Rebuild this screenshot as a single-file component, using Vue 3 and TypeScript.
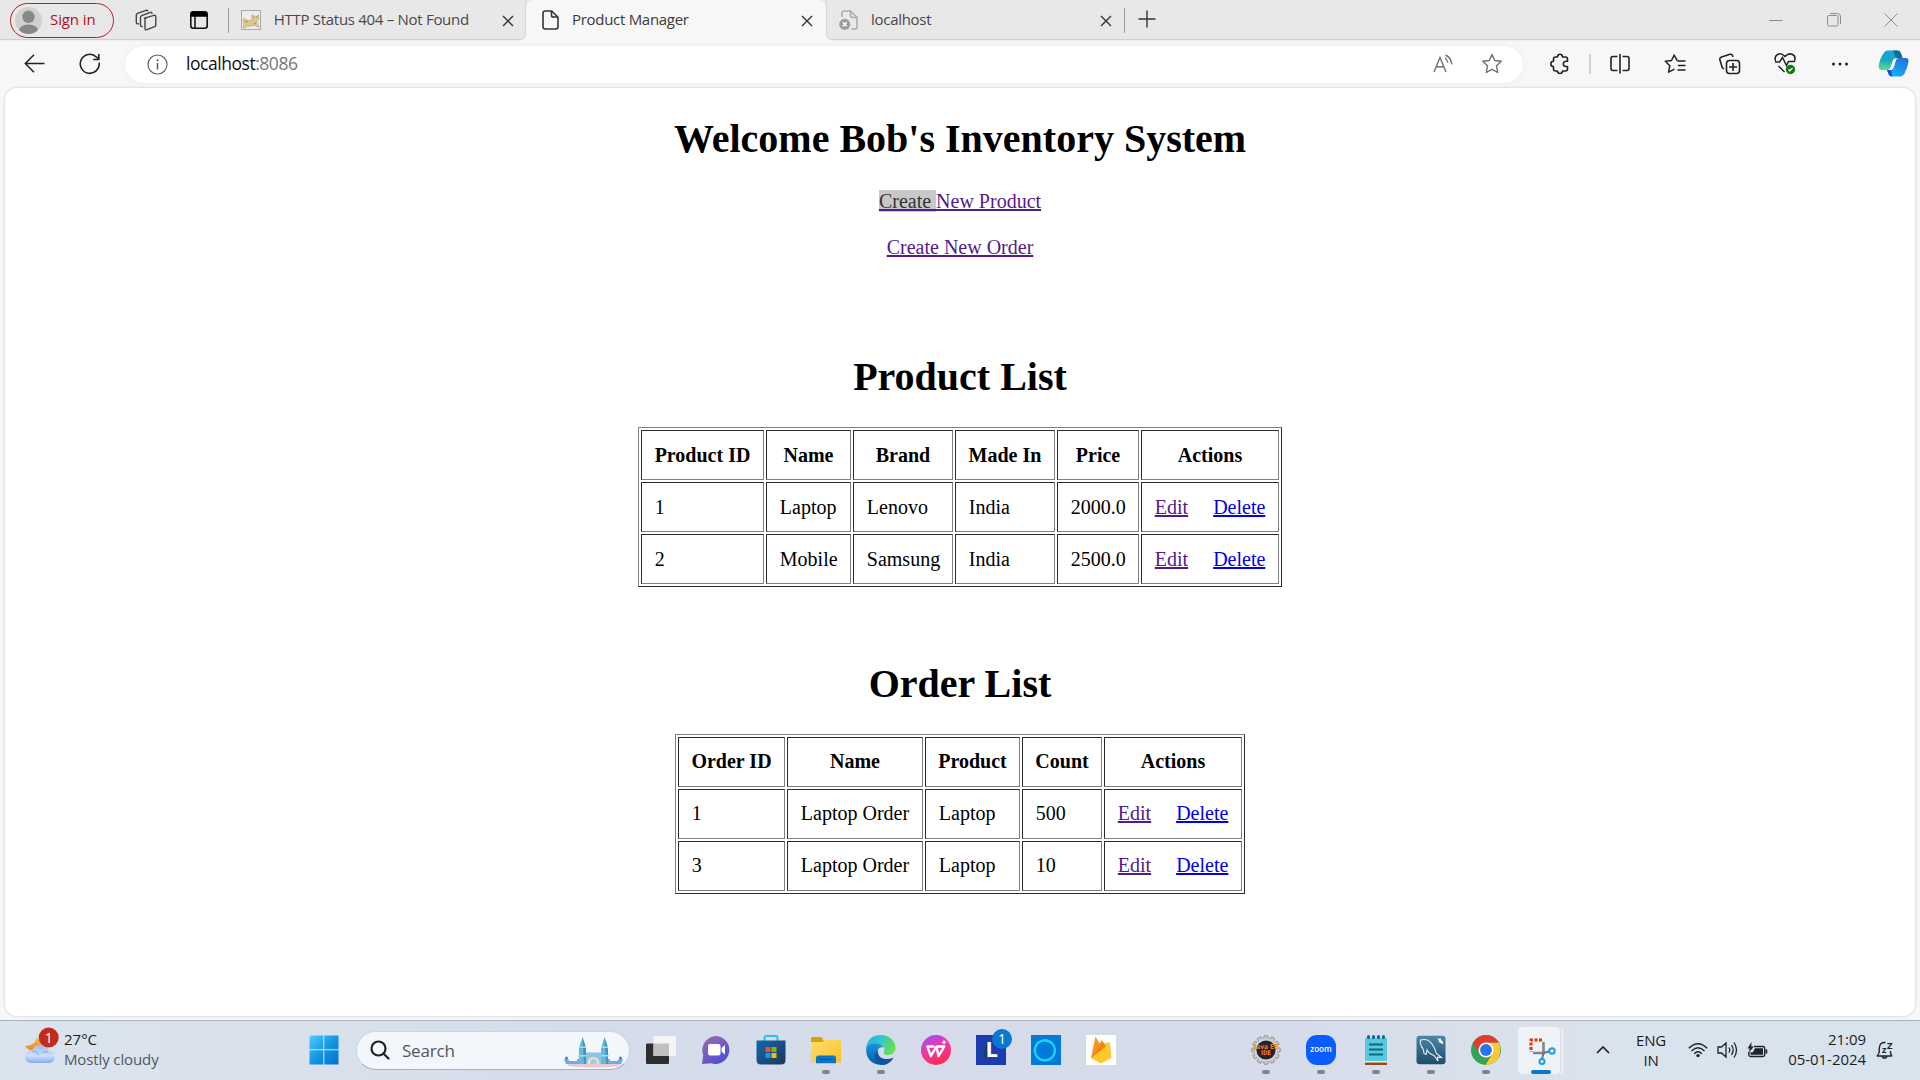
<script setup lang="ts">
interface Column { label: string; width: number }
interface Listing { title: string; kind: string; columns: Column[]; rows: string[][] }

const listings: Listing[] = [
  {
    title: 'Product List',
    kind: 'products',
    columns: [
      { label: 'Product ID', width: 123 },
      { label: 'Name', width: 85 },
      { label: 'Brand', width: 100 },
      { label: 'Made In', width: 100 },
      { label: 'Price', width: 82 },
      { label: 'Actions', width: 138 },
    ],
    rows: [
      ['1', 'Laptop', 'Lenovo', 'India', '2000.0'],
      ['2', 'Mobile', 'Samsung', 'India', '2500.0'],
    ],
  },
  {
    title: 'Order List',
    kind: 'orders',
    columns: [
      { label: 'Order ID', width: 107 },
      { label: 'Name', width: 136 },
      { label: 'Product', width: 95 },
      { label: 'Count', width: 80 },
      { label: 'Actions', width: 138 },
    ],
    rows: [
      ['1', 'Laptop Order', 'Laptop', '500'],
      ['3', 'Laptop Order', 'Laptop', '10'],
    ],
  },
]

const gearTeeth: number[] = Array.from({ length: 12 }, (_, i) => i * 30)
</script>

<template>
  <div class="desktop">
    <header class="strip">
      <div class="strip-left">
        <div class="signin">
          <svg class="avatar" width="27" height="27" viewBox="0 0 27 27">
            <defs><clipPath id="av"><circle cx="13.5" cy="13.5" r="13.5" /></clipPath></defs>
            <circle cx="13.5" cy="13.5" r="13.5" fill="#d2d0ce" />
            <g clip-path="url(#av)" fill="#8a8886"><circle cx="13.5" cy="9.8" r="6.2" /><ellipse cx="13.5" cy="24" rx="9.8" ry="6.6" /></g>
          </svg>
          <span>Sign in</span>
        </div>
        <svg class="workspaces" width="22" height="22" viewBox="0 0 22 22" fill="none" stroke="#444" stroke-width="1.4" stroke-linejoin="round" stroke-linecap="round">
          <path d="M9.5 9.2 19 6.3q1.8-.4 1.8 1.4v8.2q0 1.3-1.2 1.8l-7.6 3q-2 .7-2-1.3v-8.6q0-1.200 1.200-1.600" />
          <path d="M7.200 17.500q-1.700.300-1.700-1.400V8.400q0-1.300 1.200-1.800l8.800-3.200q1.200-.300 1.500.900" />
          <path d="M3.300 14.800q-2 .300-2-1.500V6.200q0-1.400 1.200-1.900L11 1.300q1.300-.300 1.700.700" />
        </svg>
        <svg class="tabmenu" width="18" height="18" viewBox="0 0 18 18"><rect x=".8" y=".8" width="16.400" height="16.400" rx="2.500" fill="none" stroke="#111" stroke-width="1.600" /><path d="M.8 5.800V3q0-2.200 2.200-2.200h12q2.200 0 2.200 2.200v2.800z" fill="#000" /><path d="M5 5v12" stroke="#111" stroke-width="1.500" /></svg>
        <i class="bar"></i>
        <div class="tab first">
          <svg width="20" height="20" viewBox="0 0 20 20"><rect x=".5" y=".5" width="19" height="19" fill="#ededeb" stroke="#a8a8a8" /><path d="M2 17.500 3 13.500 1.800 10l1.400-2 2.500 2.200 5 .3.300-6 2 1.700h2.500l2-1.700.3 4.500-2 2.500.5 2.700 2.200 2.300-1.500.5-3.700-1.700-3 .7-4 .3-3 2.200z" fill="#dfc68c" stroke="#a39a82" stroke-width=".5" /><path d="M12 7h1M15 7h1M4 12l3-1M13 13l2 1" stroke="#8b7748" stroke-width=".8" /></svg>
          <span>HTTP Status 404 – Not Found</span>
          <svg class="close" width="12" height="12" viewBox="0 0 12 12"><path d="m1 1 10 10M11 1 1 11" stroke="#333" stroke-width="1.400" /></svg>
        </div>
      </div>
      <div class="strip-active">
        <div class="tab active">
          <svg width="17" height="20" viewBox="0 0 17 20" fill="none" stroke="#333" stroke-width="1.600" stroke-linejoin="round"><path d="M3.200 1h6.500L16 7.300v9.500Q16 19 13.800 19H3.200Q1 19 1 16.800V3.200Q1 1 3.200 1z" /><path d="M9.500 1v4.200q0 1.800 1.800 1.800H16" /></svg>
          <span>Product Manager</span>
          <svg class="close" width="12" height="12" viewBox="0 0 12 12"><path d="m1 1 10 10M11 1 1 11" stroke="#333" stroke-width="1.400" /></svg>
        </div>
      </div>
      <div class="strip-right">
        <div class="tab third">
          <svg width="19" height="20" viewBox="0 0 19 20" fill="none" stroke="#aaa" stroke-width="1.500"><path d="M3 7V3q0-2 2-2h6.500L18 7.500V17q0 2-2 2h-3.500" /><path d="M11.500 1v4.500q0 2 2 2H18" /><circle cx="5.700" cy="14.300" r="5.500" fill="#9b9b9b" stroke="none" /><path d="m3.700 12.300 4 4m0-4-4 4" stroke="#fff" /></svg>
          <span>localhost</span>
          <svg class="close" width="12" height="12" viewBox="0 0 12 12"><path d="m1 1 10 10M11 1 1 11" stroke="#333" stroke-width="1.400" /></svg>
        </div>
        <i class="bar"></i>
        <svg class="plus" width="18" height="18" viewBox="0 0 18 18"><path d="M9 .5v17M.5 9h17" stroke="#333" stroke-width="1.400" /></svg>
        <div class="window-buttons">
          <svg width="14" height="14" viewBox="0 0 14 14"><path d="M0 7.500h13.500" stroke="#8c8c8c" /></svg>
          <svg width="14" height="14" viewBox="0 0 14 14" fill="none" stroke="#8c8c8c"><rect x=".5" y="2.500" width="10.500" height="10.500" rx="1.500" /><path d="M3 .5h7.500q3 0 3 3V11" /></svg>
          <svg width="14" height="14" viewBox="0 0 14 14"><path d="m.5.5 13 13m0-13-13 13" stroke="#8c8c8c" /></svg>
        </div>
      </div>
    </header>

    <nav class="toolbar">
      <div class="slot"><svg width="21" height="19" viewBox="0 0 21 19" fill="none" stroke="#222" stroke-width="1.500"><path d="M20.500 9.500H1.500M10 .8 1.300 9.500l8.700 8.700" /></svg></div>
      <div class="slot"><svg width="22" height="22" viewBox="0 0 22 22" fill="none" stroke="#222" stroke-width="1.600"><path d="M20.200 9.500A9.500 9.500 0 1 1 17.600 4.200L19.500 6" /><path d="M19.800 1v5.500h-5.600" /></svg></div>
      <div class="address">
        <svg class="info" width="21" height="21" viewBox="0 0 21 21"><circle cx="10.500" cy="10.500" r="9.500" fill="none" stroke="#666" stroke-width="1.200" /><path d="M10.500 9v6.500" stroke="#555" stroke-width="1.400" /><circle cx="10.500" cy="6.200" r="1" fill="#555" /></svg>
        <span class="url">localhost<b>:8086</b></span>
        <svg class="read" width="21" height="20" viewBox="0 0 21 20" fill="none" stroke="#707070" stroke-width="1.400"><path d="m1 18 6-14.500L13 18M3.300 12.700h7.400M12 3.800q2.500 1.500 2.800 5M12.500 1q5.500 2.500 6.300 9.300" /></svg>
        <svg class="star" width="22" height="22" viewBox="0 0 22 22"><path d="m11 1.500 2.700 6 6.500.800-4.700 4.500 1.200 6.700L11 16.300l-5.700 3.200 1.200-6.700L1.800 8.300l6.500-.8z" fill="none" stroke="#707070" stroke-width="1.400" stroke-linejoin="round" /></svg>
      </div>
      <div class="slot puzzle"><svg width="22" height="22" viewBox="0 0 22 22"><path d="M6.500 4H8.500Q8.600 1.300 11 1.300T13.500 4H16.500Q18.500 4 18.500 6V8.300H16.700Q14.300 8.700 14.300 11T16.700 13.500H18.500V16Q18.500 18 16.500 18H13.500Q13.400 20.500 11 20.500T8.500 18H6.500Q4.500 18 4.500 16V13.500Q1.800 13.400 1.800 11T4.500 8.300V6Q4.500 4 6.500 4z" fill="none" stroke="#222" stroke-width="1.600" stroke-linejoin="round" /></svg></div>
      <i class="divider"></i>
      <div class="slot"><svg width="20" height="20" viewBox="0 0 20 20" fill="none" stroke="#222" stroke-width="1.600"><path d="M7.500 2.500H3q-2 0-2 2v10q0 2 2 2h4.500M12.500 2.500H17q2 0 2 2v10q0 2-2 2h-4.500M10 0v19.500" /></svg></div>
      <div class="slot"><svg width="22" height="20" viewBox="0 0 22 20" fill="none" stroke="#222" stroke-width="1.500" stroke-linejoin="round" stroke-linecap="round"><path d="M13 6.300 10.200 1 7.500 6.500 1.300 7.200l4.500 4.500-1.200 6.500L10 15.300M14 7h7M14.500 11.500H21M14 16h7" /></svg></div>
      <div class="slot"><svg width="22" height="22" viewBox="0 0 22 22" fill="none" stroke="#222" stroke-width="1.600"><path d="M5 16 3.200 14.500.9 6.800Q.4 4.700 2.500 4L11 1.300q2-.5 2.600 1.400l.4 1.300" /><rect x="7.500" y="7.500" width="13" height="13" rx="3" /><path d="M14 10v8M10 14h8" /></svg></div>
      <div class="slot"><svg width="22" height="23" viewBox="0 0 22 23" fill="none" stroke="#222" stroke-width="1.500"><path d="M1.600 9Q0 4.500 3.500 2.500T11 4.500Q14.500.6 18.500 2.500t1.700 7.500M4.500 14l6 6M1 10h4.500L8.500 5.500l4 8 2-4H20" /><circle cx="16.500" cy="17.500" r="4.700" fill="#107c10" stroke="none" /><path d="m14.500 17.500 1.300 1.300 2.700-2.700" stroke="#fff" stroke-width="1.300" /></svg></div>
      <div class="slot"><svg width="18" height="6" viewBox="0 0 18 6" fill="#222"><circle cx="2.500" cy="3" r="1.500" /><circle cx="9" cy="3" r="1.500" /><circle cx="15.500" cy="3" r="1.500" /></svg></div>
      <div class="slot copilot">
        <svg width="31" height="27" viewBox="0 0 31 27">
          <defs>
            <linearGradient id="cpa" x1=".3" y1="0" x2=".2" y2="1"><stop offset="0" stop-color="#12a3dc" /><stop offset=".5" stop-color="#18a9c4" /><stop offset="1" stop-color="#62dc92" /></linearGradient>
            <linearGradient id="cpb" x1=".8" y1="0" x2=".3" y2="1"><stop offset="0" stop-color="#2670dc" /><stop offset="1" stop-color="#14b2f8" /></linearGradient>
          </defs>
          <path d="M7 1.500Q8 .5 10 .5h9q3 0 4 3L24.500 8h-5.200q-2 0-2.500 2l-2 7q-.8 3-4 3H4.500Q.3 20 .7 16 2 7 7 1.500z" fill="url(#cpa)" />
          <path d="M15 .5h4q3 0 4 3L24.500 8h-6.700z" fill="#116a91" />
          <path d="M24 26q1.500-.7 2.500-2.500Q30 17 30.500 11q.3-3-3-3h-7.200q-2 0-2.500 2l-2.300 7q-.8 3-4 3H9l1.500 4q.8 2.500 4 2.500h7q1.500 0 2.500-.5z" fill="url(#cpb)" />
          <path d="m9 20 1.500 4q.8 2.500 4 2.500L13 19.500q-.8.500-2 .5z" fill="#1b4ae0" />
          <path d="M19 8.200q-3.700 0-4.500 2.800l-1.700 5.700q-.8 2.800-3.300 3.300h2.500q3 0 3.900-3l2-6.800q.6-1.800 2.100-2z" fill="#fff" />
        </svg>
      </div>
    </nav>

    <div class="page-frame">
      <main class="page">
        <h1>Welcome Bob's Inventory System</h1>
        <p><a class="visited"><span class="selected">Create </span>New Product</a></p>
        <p><a class="visited">Create New Order</a></p>
        <section v-for="list in listings" :key="list.kind" :class="list.kind">
          <h1>{{ list.title }}</h1>
          <table>
            <colgroup><col v-for="c in list.columns" :key="c.label" :style="{ width: c.width + 'px' }"></colgroup>
            <thead>
              <tr><th v-for="c in list.columns" :key="c.label">{{ c.label }}</th></tr>
            </thead>
            <tbody>
              <tr v-for="row in list.rows" :key="row[0]">
                <td v-for="(cell, i) in row" :key="i">{{ cell }}</td>
                <td><a class="visited">Edit</a><a class="fresh">Delete</a></td>
              </tr>
            </tbody>
          </table>
        </section>
      </main>
    </div>

    <footer class="taskbar">
      <div class="weather">
        <svg width="36" height="38" viewBox="0 0 36 38">
          <defs>
            <linearGradient id="cl" x1="0" y1="0" x2="0" y2="1"><stop offset="0" stop-color="#9dbbef" /><stop offset=".6" stop-color="#cfe0fa" /><stop offset="1" stop-color="#86a9ef" /></linearGradient>
            <linearGradient id="mn" x1="0" y1="0" x2="0" y2="1"><stop offset="0" stop-color="#fbc336" /><stop offset="1" stop-color="#f2862a" /></linearGradient>
          </defs>
          <path d="M13 7q1 11-12 12 4 6 12 4 6-1 8-7-8-1-8-9z" fill="url(#mn)" />
          <path d="M8 36Q1 36 1 30t7-6.500Q10 17.500 17 17.500t8 6.500q6-.5 6 5.500t-6 6.500z" fill="url(#cl)" />
          <path d="M8 24q5 0 7 4m3-2q3-2 6-1" fill="none" stroke="#7fa4e6" />
          <circle cx="24.700" cy="10.500" r="10" fill="#c42b1c" />
          <text x="24.700" y="15.500" text-anchor="middle" fill="#fff" font-size="14" font-family="Open Sans, sans-serif">1</text>
        </svg>
        <div class="weather-text"><span>27°C</span><small>Mostly cloudy</small></div>
      </div>

      <div class="task start">
        <svg width="30" height="30" viewBox="0 0 30 30">
          <defs><linearGradient id="wn" gradientUnits="userSpaceOnUse" x1="0" y1="0" x2="30" y2="30"><stop offset="0" stop-color="#4fd0fb" /><stop offset=".5" stop-color="#1696e3" /><stop offset="1" stop-color="#006fd0" /></linearGradient></defs>
          <path d="M1.500.5H14.300V14.300H.500V1.500zM15.300.5H29.500V14.300H15.300zM.5 15.300H14.300V29.500H.5zM15.300 15.300H29.500V29.500H15.300z" fill="url(#wn)" />
        </svg>
      </div>

      <div class="search">
        <svg width="20" height="20" viewBox="0 0 20 20" fill="none" stroke="#222" stroke-width="2.200"><circle cx="8.500" cy="8.500" r="7" /><path d="m13.500 13.500 5 5" stroke-linecap="round" /></svg>
        <span>Search</span>
        <svg class="castle" width="59" height="32" viewBox="0 0 59 32">
          <ellipse cx="30" cy="29" rx="27" ry="2.500" fill="#e9c9d6" />
          <path d="M0 23h4l1.500 2H13v-2h2v-4h29v4h2v2h7.500l1.500-2h4l-2 5H2z" fill="#69b0d8" />
          <path d="M15 28V12l3.500-11L22 12v16z" fill="#62bcd6" /><path d="M37 28V12l3.500-11L44 12v16z" fill="#62bcd6" />
          <path d="M18.500 1 22 12v16h-2zM40.500 1 44 12v16h-2z" fill="#4a90c6" />
          <path d="M15 10.500h7v1.500h-7zM37 10.500h7v1.500h-7zM14 19h9v1.500h-9zM36 19h9v1.500h-9z" fill="#9be0ee" />
          <path d="M22 16.500h15V28H22z" fill="#8cc4ea" />
          <path d="M23.500 28q0-7 6-7t6 7z" fill="#f1dec6" /><path d="M26 28q0-5 3.500-5t3.500 5z" fill="#a5cce0" />
          <circle cx="2.500" cy="22" r="1.500" fill="#3e86bd" /><circle cx="56.500" cy="22" r="1.500" fill="#3e86bd" />
        </svg>
      </div>

      <div class="task view">
        <svg width="30" height="28" viewBox="0 0 30 28"><rect y="7.500" width="23" height="20.500" rx="1" fill="#2d2f2e" /><rect x="7.500" y="0" width="22.500" height="20" rx="1" fill="#f5f5f5" /><path d="M7.500 7.500H23v12.500H7.500z" fill="#bfc0c0" /></svg>
      </div>
      <div class="task">
        <svg width="30" height="30" viewBox="0 0 30 30">
          <defs><linearGradient id="ch" x1="0" y1="0" x2=".7" y2="1"><stop offset="0" stop-color="#a36cab" /><stop offset="1" stop-color="#4c4fd2" /></linearGradient></defs>
          <path d="M15 1A14 14 0 1 1 10 28.300L1 29l1.200-9A14 14 0 0 1 15 1z" fill="url(#ch)" /><rect x="7" y="9" width="12.500" height="11.500" rx="2" fill="#fff" /><path d="m20.500 13 3.500-3v9.500l-3.500-3z" fill="#fff" />
        </svg>
      </div>
      <div class="task">
        <svg width="30" height="30" viewBox="0 0 30 30">
          <defs><linearGradient id="st" x1="0" y1="0" x2="1" y2="1"><stop offset="0" stop-color="#1268b0" /><stop offset="1" stop-color="#1f3658" /></linearGradient></defs>
          <path d="M8.500 7V3q0-2 2-2h9q2 0 2 2v4" fill="none" stroke="#2fbdf0" stroke-width="2" /><path d="M.5 5.500h29V25q0 4.500-4.500 4.500H5Q.5 29.500.5 25z" fill="url(#st)" /><path d="M9.500 12h5v5h-5z" fill="#f25022" /><path d="M15.500 12h5v5h-5z" fill="#7fba00" /><path d="M9.500 18h5v5h-5z" fill="#00a4ef" /><path d="M15.500 18h5v5h-5z" fill="#ffb900" />
        </svg>
      </div>
      <div class="task open">
        <svg width="30" height="30" viewBox="0 0 30 30">
          <defs><linearGradient id="fo" x1="0" y1="0" x2="1" y2="1"><stop offset="0" stop-color="#ffdf68" /><stop offset="1" stop-color="#f9c02c" /></linearGradient></defs>
          <path d="M0 8V3.500Q0 2 1.500 2H10l2.500 3H29v4z" fill="#dca003" /><path d="M0 7h11l2.500-2H29q1 0 1 1v21.500H0z" fill="url(#fo)" /><path d="M5 28.300V23q0-2.500 2.500-2.500h15Q25 20.500 25 23v5.300z" fill="#0b74c5" /><path d="M8.500 24.500h13" stroke="#064b8d" />
        </svg>
      </div>
      <div class="task open">
        <svg width="30" height="30" viewBox="0 0 30 30">
          <defs>
            <linearGradient id="ea" x1="0" y1="0" x2="1" y2=".3"><stop offset="0" stop-color="#31a9e0" /><stop offset=".5" stop-color="#2fc5d4" /><stop offset="1" stop-color="#66df50" /></linearGradient>
            <linearGradient id="eb" x1="0" y1="0" x2="0" y2="1"><stop offset="0" stop-color="#1795df" /><stop offset="1" stop-color="#0a59a4" /></linearGradient>
          </defs>
          <path d="M.2 13Q2 0 15 0q8.500 0 13 7 4 8-2 12.200-3 1.500-7 .3-2.500-1-.7-3.500Q19.500 11 14 10 6 9 .2 13z" fill="url(#ea)" />
          <path d="M.2 13Q3 8 10 8.500q5.500.5 7.500 4-5-1.500-6 4-.5 7 6.500 9 5 1 9.300-2.300Q23 30 15 30 2 29 .2 17z" fill="url(#eb)" />
          <path d="M11.500 15.500Q6 21 11.500 28q3 2.500 8 1.500 4.500-1.500 8-7Q22 25 17 23.500t-5.500-8z" fill="#11569d" />
        </svg>
      </div>
      <div class="task">
        <svg width="30" height="30" viewBox="0 0 30 30">
          <defs><linearGradient id="wp" x1=".2" y1="0" x2=".6" y2="1"><stop offset="0" stop-color="#a34bf5" /><stop offset=".5" stop-color="#ef3aa1" /><stop offset="1" stop-color="#ff2a50" /></linearGradient></defs>
          <circle cx="15" cy="15" r="15" fill="url(#wp)" /><path d="M12.500 11.500H6.300l3.500 9.700 5.700-9.700 2 9.700 5.800-9.700H17" fill="none" stroke="#fff" stroke-width="2.300" stroke-linejoin="round" stroke-linecap="round" /><path d="m23 4.500.8 2 2 .8-2 .8-.8 2-.8-2-2-.8 2-.8z" fill="#fff" />
        </svg>
      </div>
      <div class="task">
        <svg class="lapp" width="36" height="36" viewBox="0 0 36 36"><path d="M0 6h30v30H0z" fill="#1d3cae" /><path d="m10 13-2 15h12l2-2-10-1z" fill="#12434c" /><text x="9.500" y="27.500" font-size="22" font-weight="700" font-family="Open Sans, sans-serif" fill="#fff">L</text><circle cx="26" cy="10" r="10" fill="#0878d1" /><text x="26" y="15" text-anchor="middle" fill="#fff" font-size="14" font-family="Open Sans, sans-serif">1</text></svg>
      </div>
      <div class="task">
        <svg width="30" height="30" viewBox="0 0 30 30"><path d="M0 0h30v30H0z" fill="#0379d8" /><path d="M12.500 25.300A10 10 0 1 1 18 24.500q-2.500 1-5.500.8" fill="none" stroke="#19d1fa" stroke-width="2.500" /></svg>
      </div>
      <div class="task">
        <svg width="30" height="30" viewBox="0 0 30 30"><path d="M0 0h30v30H0z" fill="#fff" /><path d="M5 23 9.500 1.500l4 7L16 5l2 3.500L24 9l1 14z" fill="#f6921e" /><path d="m5 23 15-15L23.500 7 25.500 23 15 28.500z" fill="#fdc92f" /><path d="m5 23 12-15.500 3 4z" fill="#f57c17" /></svg>
      </div>

      <div class="task open ide">
        <svg width="30" height="30" viewBox="0 0 30 30">
          <g fill="#c4c4c4" stroke="#777" stroke-width=".6"><rect v-for="a in gearTeeth" :key="a" x="12.800" y=".7" width="4.400" height="6" rx="1" :transform="`rotate(${a} 15 15)`" /></g>
          <circle cx="15" cy="15" r="11.500" fill="#d4d4d4" /><circle cx="15" cy="15" r="9.600" fill="#252033" />
          <text x="3" y="13.800" font-size="6.800" font-weight="700" textLength="24" lengthAdjust="spacingAndGlyphs" font-family="DejaVu Sans, sans-serif" fill="#ee7d22">Java EE</text><text x="10" y="20.200" font-size="6.500" font-weight="700" textLength="10" lengthAdjust="spacingAndGlyphs" font-family="DejaVu Sans, sans-serif" fill="#ee7d22">IDE</text>
        </svg>
      </div>
      <div class="task open">
        <svg width="30" height="30" viewBox="0 0 30 30"><rect width="30" height="30" rx="11" fill="#0b5cff" /><text x="15" y="17.300" text-anchor="middle" font-size="8.500" font-weight="600" textLength="21.500" lengthAdjust="spacingAndGlyphs" font-family="Open Sans, sans-serif" fill="#fff">zoom</text></svg>
      </div>
      <div class="task open">
        <svg width="24" height="30" viewBox="0 0 24 30"><path d="M1 26h22v4H1z" fill="#9a4c13" /><path d="M1 25h22v2.500H1z" fill="#f4f4ef" /><path d="M1 3h22v23H1z" fill="#58c9dc" /><path d="M5 9.500h14M5 14.500h14M5 19.500h14" stroke="#0d6687" stroke-width="1.800" /><path d="M4.500 1.500v1M9.500 1.500v1M14.500 1.500v1M19.500 1.500v1" stroke="#126683" stroke-width="3" stroke-linecap="round" /></svg>
      </div>
      <div class="task open">
        <svg width="30" height="30" viewBox="0 0 30 30">
          <defs><linearGradient id="my" x1="0" y1="0" x2="0" y2="1"><stop offset="0" stop-color="#4b86a6" /><stop offset="1" stop-color="#1e4d6c" /></linearGradient></defs>
          <rect x=".5" y=".8" width="29" height="28.500" rx="3" fill="url(#my)" /><path d="M4.500 5Q12 3 16 9t4 9l5.500 4.500-4-.3.500 3.800-4-5.500Q12 18 11 15l-1 4.500-2-1q-.5-5-2.500-7-2-3-1-6.500z" fill="none" stroke="#e6eff5" stroke-width="1.100" /><path d="m20 3 3 1 1-1 3.500 5-1 1-3.500-2-1-3z" fill="#fff" />
        </svg>
      </div>
      <div class="task open">
        <svg width="30" height="30" viewBox="0 0 30 30"><circle cx="15" cy="15" r="15" fill="#34a353" /><path d="M15 7.500h13Q31 15 27.500 23 23 30 14.500 30L21.500 18.500z" fill="#fcc934" /><path d="M2 7.500Q7 0 15 0t13 7.500H15L8.500 18.500z" fill="#e33b2e" /><circle cx="15" cy="15" r="7.500" fill="#fff" /><circle cx="15" cy="15" r="5.900" fill="#2b73ec" /></svg>
      </div>
      <div class="task current">
        <i class="stack"></i>
        <div class="tile">
          <svg width="28" height="28" viewBox="0 0 28 28" fill="none"><path d="M14 3H3v12" stroke="#d83b01" stroke-width="3" stroke-dasharray="3 1.500" /><path d="M15.500 5v12M5 16h12" stroke="#80858a" stroke-width="2.600" /><path d="M15.500 16 21 14.500M15.500 16l-1.500 6" stroke="#6a7580" stroke-width="2" /><circle cx="24" cy="14" r="2.700" stroke="#1a9ee4" stroke-width="2" /><circle cx="14" cy="24.500" r="2.500" stroke="#1a9ee4" stroke-width="2" /></svg>
        </div>
      </div>

      <div class="tray">
        <svg class="caret" width="14" height="8" viewBox="0 0 14 8"><path d="m1 7 6-6 6 6" fill="none" stroke="#222" stroke-width="1.700" /></svg>
        <div class="lang"><span>ENG</span><span>IN</span></div>
        <svg class="wifi" width="20" height="16" viewBox="0 0 20 16" fill="none" stroke="#1d2329" stroke-width="1.400"><path d="M.8 6.200q9.200-9 18.400 0M3.500 9q6.500-6.500 13 0M6.200 11.700q3.800-3.700 7.600 0" /><circle cx="10" cy="13.600" r="1.700" fill="#1d2329" stroke="none" /></svg>
        <svg class="volume" width="21" height="18" viewBox="0 0 21 18" fill="none" stroke="#1d2329" stroke-width="1.300"><path d="M1 6h3.500L9 2v14l-4.500-4H1zM12 6.500q1.500 2.500 0 5M14.500 4q3.300 5 0 10M17 1.500q5 7.500 0 15" /></svg>
        <svg class="battery" width="21" height="17" viewBox="0 0 21 17"><path d="M7 4.500h9q1.700 0 1.700 1.700v6.600q0 1.700-1.700 1.700H3.500q-1.700 0-1.700-1.700V10" fill="none" stroke="#1d2329" stroke-width="1.400" /><path d="M8 6.200h8v6.600H3.500v-2.500H6zM18.500 7.500h1.800v4h-1.800zM4.500 0 .5 6.500h2.300L1.500 11l5.500-6.500H4.300z" fill="#1d2329" /></svg>
        <div class="clock"><span>21:09</span><span>05-01-2024</span></div>
        <svg class="bell" width="18" height="20" viewBox="0 0 18 20"><path d="M9.500 2.500Q3.500 2 3.200 8.500v4L1.200 16h14.500l-1.200-3v-2M6 16.500q2.500 3.500 5 0" fill="none" stroke="#1d2329" stroke-width="1.400" stroke-linejoin="round" /><text x="6" y="13" font-size="9" font-weight="700" font-family="Open Sans, sans-serif" fill="#1d2329">z</text><text x="11" y="8.500" font-size="9.500" font-weight="700" font-family="Open Sans, sans-serif" fill="#1d2329">Z</text></svg>
      </div>
    </footer>
  </div>
</template>

<style>
body { margin: 0; overflow: hidden; }
</style>

<style scoped>
.desktop { width: 1920px; height: 1080px; display: flex; flex-direction: column; overflow: hidden; background: #f7f7f7; font-family: "Open Sans", "Noto Sans", sans-serif; font-size: 15px; }
.desktop * { box-sizing: border-box; }
svg { display: block; flex: none; }

.strip { height: 40px; display: flex; flex: none; }
.strip-left, .strip-right { background: #e8e8e8; border-bottom: 1px solid #cfcfcf; display: flex; align-items: center; box-shadow: 0 1px 1px #ececec; }
.strip-left { width: 526px; border-bottom-right-radius: 7px; border-right: 1px solid #d6d6d6; }
.strip-active { width: 300px; background: linear-gradient(#e8e8e8 12px, #f7f7f7 12px); }
.strip-right { flex: 1; border-bottom-left-radius: 7px; border-left: 1px solid #d6d6d6; }
.signin { width: 104px; height: 35px; margin-left: 10px; border: 1.500px solid #b3202a; border-radius: 18px; display: flex; align-items: center; padding-left: 4px; color: #b10e1c; margin-top: 1px; }
.signin span { margin-left: 8px; margin-top: -2px; letter-spacing: -.1px; line-height: 20px; }
.workspaces { margin-left: 21px; }
.tabmenu { margin-left: 33px; margin-top: 1px; }
.bar { width: 1px; height: 25px; background: #9d9d9d; margin-top: 1px; }
.strip-left .bar { margin-left: 20px; }
.tab { display: flex; align-items: center; height: 39px; color: #494949; letter-spacing: -.29px; padding-top: 1px; }
.tab span { line-height: 20px; white-space: nowrap; margin-top: -2px; }
.tab .close { margin-left: auto; margin-top: 1px; }
.first { width: 297px; padding-left: 12px; padding-right: 11px; }
.first span { margin-left: 13px; }
.active { width: 300px; height: 40px; background: #f7f7f7; border-radius: 8px 8px 0 0; padding-left: 16px; padding-right: 13px; padding-top: 0; color: #3a3a3a; }
.active span { margin-left: 13px; }
.third { width: 297px; padding-left: 12px; padding-right: 12px; }
.third span { margin-left: 13px; }
.plus { margin-left: 13px; margin-top: -1px; }
.window-buttons { margin-left: auto; margin-right: 22px; display: flex; gap: 43.500px; }

.toolbar { height: 48px; display: flex; align-items: center; flex: none; padding-left: 7px; }
.slot { width: 55px; height: 48px; display: flex; align-items: center; justify-content: center; flex: none; padding-bottom: 1px; }
.copilot { width: 50px; margin-left: 1px; }
.puzzle { margin-left: 9px; }
.address { width: 1398px; height: 37px; margin-left: 8px; background: #fff; border-radius: 19px; display: flex; align-items: center; box-shadow: 0 0 3px 1px #ededed; }
.info { margin-left: 22px; }
.url { margin-left: 18px; margin-top: -2px; font-size: 17.500px; letter-spacing: -.46px; color: #111; line-height: 24px; }
.url b { font-weight: 400; color: #777; }
.read { margin-left: auto; margin-right: 27px; }
.star { margin-right: 20px; }
.divider { width: 2px; height: 20px; margin: 0 1px 0 2px; background: #cfcfcf; }

.page-frame { flex: 1; padding: 0 5px; }
.page { height: 928px; background: #fff; border-radius: 12px; box-shadow: 0 0 2px 1px #dedede; padding-top: 28px; font: 20px/23px "Liberation Serif", "Times New Roman", serif; color: #000; text-align: center; }
h1 { font-size: 40px; line-height: 46px; font-weight: 700; margin: 0 0 27px; }
p { margin: 0 0 21px; line-height: 25px; }
.page a { text-decoration: underline; text-decoration-thickness: 2px; text-underline-offset: 1px; }
.visited { color: #551a8b; }
.fresh { color: #0000ee; margin-left: 25px; }
.selected { background: #c8c8c8; color: #333; display: inline; }
.products { padding-top: 73px; }
.orders { padding-top: 74px; }
table { margin: 0 auto; border: 1px solid; border-color: #808080 #2c2c2c #2c2c2c #808080; border-collapse: separate; border-spacing: 2px; table-layout: auto; }
.products table { width: 644px; }
.orders table { width: 570px; }
th, td { border: 1px solid; border-color: #2c2c2c #808080 #808080 #2c2c2c; height: 50px; line-height: 23px; white-space: nowrap; }
.products th, .products td { padding: 13px 12px 12px; }
.orders th, .orders td { padding: 12px 12px 13px; }
.products td, .orders td { text-align: left; padding-left: 12.800px; padding-right: 11px; }
th { text-align: center; font-weight: 700; }

.taskbar { height: 60px; flex: none; display: flex; align-items: center; border-top: 1px solid #adb1b8; background: linear-gradient(90deg, #dae4ee, #d9e1ec 16%, #d4dcea 32%, #d6dbe9 65%, #dae3ed 82%, #d8e3ee); color: #1d1d1f; }
.weather { width: 296px; padding-left: 24px; display: flex; align-items: center; }
.weather svg { margin-top: -9px; }
.weather-text { display: flex; flex-direction: column; margin-left: 4px; margin-top: -3px; line-height: 20px; }
.weather-text small { font-size: 15px; letter-spacing: -.12px; color: #51575e; }
.task { width: 55px; height: 59px; display: flex; align-items: center; justify-content: center; position: relative; flex: none; padding-bottom: 1px; }
.open::after { content: ""; position: absolute; left: 23.500px; bottom: 6px; width: 8px; height: 4px; border-radius: 2px; background: #7f838b; }
.search { width: 274px; height: 39px; margin-left: 5px; margin-top: -1px; border-radius: 20px; background: #f3f6fa; border: 1px solid #cdd5e2; border-bottom-color: #a9afc2; display: flex; align-items: center; padding-left: 13px; }
.search span { margin-left: 12px; font-size: 17px; letter-spacing: -.2px; color: #51565c; line-height: 24px; margin-top: 1px; }
.castle { margin-left: auto; margin-right: 6px; margin-top: 3px; }
.view { margin-left: 3.500px; }
.lapp { margin-left: 6px; margin-top: -6px; }
.ide { margin-left: 109.500px; }
.stack { position: absolute; left: 8px; top: 5px; width: 44px; height: 49px; border-radius: 5px; background: #e9edf3; border: 1px solid #dadfe7; }
.tile { position: absolute; left: 4px; top: 5px; width: 44px; height: 49px; border-radius: 5px; background: #eff2f6; border: 1px solid #dfe3e9; padding: 10px 0 0 10px; }
.current::after { content: ""; position: absolute; left: 18px; bottom: 6px; width: 20px; height: 4px; border-radius: 2px; background: #0878d4; }
.tray { display: flex; align-items: center; flex: 1; height: 59px; padding-bottom: 1px; }
.caret { margin-left: 28px; }
.lang { width: 50px; margin-left: 16px; margin-top: -1px; display: flex; flex-direction: column; align-items: center; line-height: 20px; letter-spacing: -.2px; }
.wifi { margin-left: 12px; }
.volume { margin-left: 9px; }
.battery { margin-left: 9px; }
.clock { width: 98px; display: flex; flex-direction: column; align-items: flex-end; line-height: 20px; margin-top: -2px; letter-spacing: -.05px; }
.bell { margin-left: 10px; }
</style>
